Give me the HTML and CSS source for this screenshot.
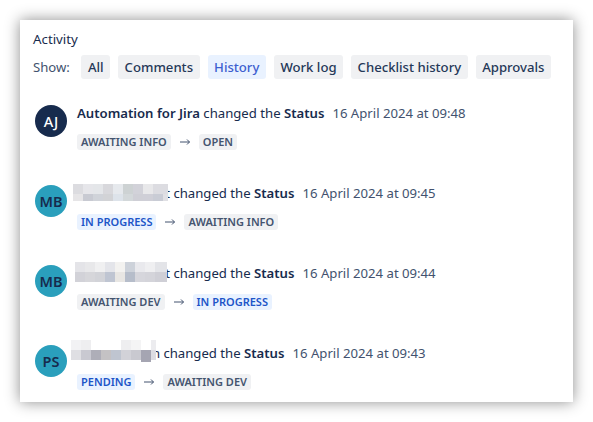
FILE: index.html
```html
<!DOCTYPE html>
<html lang="en">
<head>
    <meta charset="UTF-8">
    <title>Activity</title>
    <link rel="stylesheet" href="styles.css">
</head>
<body>
    <div class="panel">
        <h2 class="title">Activity</h2>
        <div class="tabs">
            <span class="show">Show:</span>
            <span class="tab">All</span>
            <span class="tab">Comments</span>
            <span class="tab active">History</span>
            <span class="tab">Work log</span>
            <span class="tab">Checklist history</span>
            <span class="tab">Approvals</span>
        </div>

        <div class="item">
            <div class="avatar navy">AJ</div>
            <div class="body">
                <p class="line"><strong>Automation for Jira</strong> changed the <strong>Status</strong><span class="date">16 April 2024 at 09:48</span></p>
                <div class="change">
                    <span class="lozenge">Awaiting info</span>
                    <svg class="arrow" width="10" height="8" viewBox="0 0 10 8"><path d="M0 4H9.5M7 1.5L9.5 4L7 6.5" fill="none" stroke="#42526e"/></svg>
                    <span class="lozenge">Open</span>
                </div>
            </div>
        </div>

        <div class="item">
            <div class="avatar">MB</div>
            <div class="body">
                <p class="line"><span class="name name-a">t
                    <svg class="blur blur-a" width="95" height="17" viewBox="0 0 95 17" shape-rendering="crispEdges">
                        <rect x="0" y="0" width="10" height="10" fill="#dcdce0"/><rect x="10" y="0" width="10" height="10" fill="#e6e6ea"/><rect x="20" y="0" width="10" height="10" fill="#e4e6e9"/><rect x="30" y="0" width="10" height="10" fill="#d8d8dc"/><rect x="40" y="0" width="10" height="10" fill="#e6e9ed"/><rect x="50" y="0" width="10" height="10" fill="#cdd2d3"/><rect x="60" y="0" width="10" height="10" fill="#d2d2d9"/><rect x="70" y="0" width="10" height="10" fill="#e8e8ea"/><rect x="80" y="0" width="15" height="10" fill="#dcdce1"/>
                        <rect x="0" y="10" width="10" height="7" fill="#e6e5e7"/><rect x="10" y="10" width="10" height="7" fill="#c8cad2"/><rect x="20" y="10" width="10" height="7" fill="#d0d3d9"/><rect x="30" y="10" width="10" height="7" fill="#d2d3d6"/><rect x="40" y="10" width="10" height="7" fill="#dde3ea"/><rect x="50" y="10" width="10" height="7" fill="#d3d8da"/><rect x="60" y="10" width="10" height="7" fill="#cfcfd6"/><rect x="70" y="10" width="10" height="7" fill="#cfcfd7"/><rect x="80" y="10" width="10" height="7" fill="#c9ccd5"/><rect x="90" y="10" width="5" height="7" fill="#e0e0e4"/>
                    </svg>
                </span> changed the <strong>Status</strong><span class="date">16 April 2024 at 09:45</span></p>
                <div class="change">
                    <span class="lozenge blue">In progress</span>
                    <svg class="arrow" width="10" height="8" viewBox="0 0 10 8"><path d="M0 4H9.5M7 1.5L9.5 4L7 6.5" fill="none" stroke="#42526e"/></svg>
                    <span class="lozenge">Awaiting info</span>
                </div>
            </div>
        </div>

        <div class="item">
            <div class="avatar">MB</div>
            <div class="body">
                <p class="line"><span class="name name-a">t
                    <svg class="blur blur-b" width="92" height="20" viewBox="0 0 92 20" shape-rendering="crispEdges">
                        <rect x="0" y="0" width="10" height="10" fill="#e4e4e8"/><rect x="10" y="0" width="10" height="10" fill="#e8e8ea"/><rect x="20" y="0" width="10" height="10" fill="#f0f0f1"/><rect x="30" y="0" width="10" height="10" fill="#e4e5ea"/><rect x="40" y="0" width="10" height="10" fill="#f3f2f0"/><rect x="50" y="0" width="10" height="10" fill="#cdd2da"/><rect x="60" y="0" width="10" height="10" fill="#e9e9ed"/><rect x="70" y="0" width="10" height="10" fill="#efeff1"/><rect x="80" y="0" width="12" height="10" fill="#e3e4e8"/>
                        <rect x="0" y="10" width="10" height="10" fill="#d2d2d8"/><rect x="10" y="10" width="10" height="10" fill="#d6d6da"/><rect x="20" y="10" width="10" height="10" fill="#d2d3d8"/><rect x="30" y="10" width="10" height="10" fill="#bfc5d2"/><rect x="40" y="10" width="10" height="10" fill="#e8e6e3"/><rect x="50" y="10" width="10" height="10" fill="#b6bdca"/><rect x="60" y="10" width="10" height="10" fill="#d6d6dc"/><rect x="70" y="10" width="10" height="10" fill="#d4d4da"/><rect x="80" y="10" width="12" height="10" fill="#cfcfd6"/>
                    </svg>
                </span> changed the <strong>Status</strong><span class="date">16 April 2024 at 09:44</span></p>
                <div class="change">
                    <span class="lozenge">Awaiting dev</span>
                    <svg class="arrow" width="10" height="8" viewBox="0 0 10 8"><path d="M0 4H9.5M7 1.5L9.5 4L7 6.5" fill="none" stroke="#42526e"/></svg>
                    <span class="lozenge blue">In progress</span>
                </div>
            </div>
        </div>

        <div class="item">
            <div class="avatar">PS</div>
            <div class="body">
                <p class="line"><span class="name name-c">n
                    <svg class="blur blur-c" width="85" height="22" viewBox="0 0 85 22" shape-rendering="crispEdges">
                        <rect x="0" y="0" width="85" height="10" fill="#fff"/><rect x="0" y="0" width="10" height="10" fill="#f2f2f4"/><rect x="10" y="0" width="10" height="10" fill="#eeeef0"/><rect x="50" y="0" width="10" height="10" fill="#eeeef0"/><rect x="60" y="0" width="10" height="10" fill="#f4f4f5"/><rect x="80" y="0" width="5" height="10" fill="#ececef"/>
                        <rect x="0" y="10" width="10" height="10" fill="#dfdfe3"/><rect x="10" y="10" width="10" height="10" fill="#c9c9d1"/><rect x="20" y="10" width="10" height="10" fill="#aeaeb8"/><rect x="30" y="10" width="10" height="10" fill="#c4c2c4"/><rect x="40" y="10" width="10" height="10" fill="#bfc5d0"/><rect x="50" y="10" width="10" height="10" fill="#d2d2d8"/><rect x="60" y="10" width="10" height="10" fill="#c9c9d0"/><rect x="70" y="10" width="10" height="12" fill="#a5a5b2"/><rect x="80" y="10" width="5" height="10" fill="#dcdce2"/>
                    </svg>
                </span> changed the <strong>Status</strong><span class="date">16 April 2024 at 09:43</span></p>
                <div class="change">
                    <span class="lozenge blue">Pending</span>
                    <svg class="arrow" width="10" height="8" viewBox="0 0 10 8"><path d="M0 4H9.5M7 1.5L9.5 4L7 6.5" fill="none" stroke="#42526e"/></svg>
                    <span class="lozenge">Awaiting dev</span>
                </div>
            </div>
        </div>
    </div>
</body>
</html>
```

FILE: styles.css
```css
html, body {
    margin: 0;
    height: 100%;
    overflow: hidden;
}
body {
    background: #fff;
    padding: 20px;
    box-sizing: border-box;
    font-family: "Noto Sans", sans-serif;
    font-size: 13.15px;
    color: #172b4d;
}
.panel {
    height: 382px;
    width: 553px;
    box-sizing: border-box;
    padding: 10px 13px 0;
    background: #fff;
    box-shadow: 0 0 14px rgba(0,0,0,0.45);
    overflow: hidden;
}
.title {
    margin: 0;
    font-size: 13.3px;
    font-weight: 400;
    line-height: 18px;
}
.tabs {
    display: flex;
    align-items: center;
    gap: 8px;
    margin-top: 7px;
}
.show {
    margin-right: 3.5px;
    color: #42526e;
}
.tab {
    padding: 0 6.5px;
    height: 24px;
    line-height: 24px;
    border-radius: 3px;
    background: #f0f1f3;
    color: #253858;
    font-weight: 500;
}
.tab.active {
    background: #e9f2ff;
    color: #3d5fd0;
}
.item {
    display: flex;
    gap: 10px;
    height: 80px;
    padding-left: 2px;
}
.tabs + .item {
    margin-top: 25px;
}
.avatar {
    flex: none;
    width: 32px;
    height: 32px;
    margin-top: 1px;
    border-radius: 50%;
    background: #2a9fbc;
    color: #172b4d;
    font-size: 14.5px;
    font-weight: 600;
    line-height: 32px;
    text-align: center;
}
.avatar.navy {
    background: #172b4d;
    color: #fff;
    font-weight: 500;
}
.line {
    margin: 0;
    line-height: 18px;
    white-space: nowrap;
}
.line strong {
    font-weight: 600;
}
.date {
    margin-left: 8px;
    color: #42526e;
}
.name {
    position: relative;
    display: inline-block;
    height: 18px;
    vertical-align: top;
    text-align: right;
}
.name-a {
    width: 93px;
}
.name-c {
    width: 83px;
}
.blur {
    position: absolute;
}
.blur-a {
    left: -4px;
    top: 0;
}
.blur-b {
    left: -2px;
    top: -2px;
}
.blur-c {
    left: -6px;
    top: -4px;
}
.change {
    display: flex;
    align-items: center;
    gap: 9px;
    margin-top: 12px;
}
.lozenge {
    height: 16px;
    line-height: 16px;
    padding: 0 4px;
    border-radius: 3px;
    background: #f0f1f3;
    color: #44546f;
    font-size: 11px;
    font-weight: 600;
    text-transform: uppercase;
}
.lozenge.blue {
    background: #e9f2ff;
    color: #1d55c8;
}
.arrow {
    flex: none;
}
```
